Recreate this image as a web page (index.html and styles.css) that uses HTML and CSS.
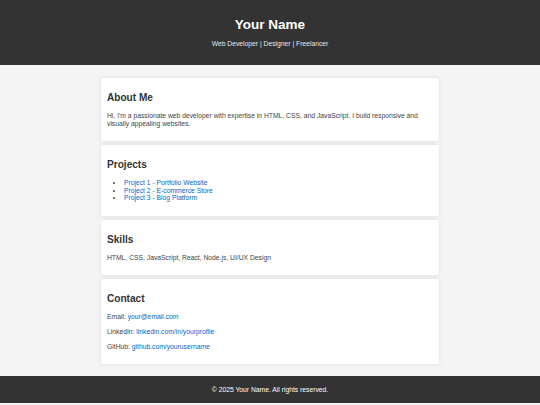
FILE: index.html
```html
<!DOCTYPE html>
<html lang="en">
<head>
    <meta charset="UTF-8">
    <meta name="viewport" content="width=device-width, initial-scale=1.0">
    <title>Your Name - Portfolio</title>
    <link rel="stylesheet" href="styles.css">
</head>
<body>

<!-- Top banner -->
<header class="site-header">
    <h1>Your Name</h1>
    <p>Web Developer | Designer | Freelancer</p>
</header>

<main class="content">
    <section class="card">
        <h2>About Me</h2>
        <p>Hi, I'm a passionate web developer with expertise in HTML, CSS, and JavaScript. I build responsive and visually appealing websites.</p>
    </section>

    <section class="card">
        <h2>Projects</h2>
        <ul class="project-list">
            <li><a href="#">Project 1 - Portfolio Website</a></li>
            <li><a href="#">Project 2 - E-commerce Store</a></li>
            <li><a href="#">Project 3 - Blog Platform</a></li>
        </ul>
    </section>

    <section class="card">
        <h2>Skills</h2>
        <p>HTML, CSS, JavaScript, React, Node.js, UI/UX Design</p>
    </section>

    <section class="card">
        <h2>Contact</h2>
        <p>Email: <a href="#">your@email.com</a></p>
        <p>LinkedIn: <a href="#">linkedin.com/in/yourprofile</a></p>
        <p>GitHub: <a href="#">github.com/yourusername</a></p>
    </section>
</main>

<footer class="site-footer">
    <p>&copy; 2025 Your Name. All rights reserved.</p>
</footer>

</body>
</html>
```

FILE: styles.css
```css
body {
    font-family: "Liberation Sans", Arial, sans-serif;
    font-size: 6.75px;
    margin: 0;
    padding: 0;
    background-color: #f4f4f4;
    color: #444;
}

/* Header */
.site-header {
    background-color: #333;
    color: white;
    text-align: center;
    padding: 17px 0 17.5px;
}

.site-header h1 {
    margin: 0 0 8px;
    font-size: 13.5px;
}

.site-header p {
    margin: 0;
    color: #e6e6e6;
}

/* Cards */
.content {
    width: 338px;
    margin: 13px auto 12px;
}

.card {
    background-color: white;
    padding: 6px;
    margin-bottom: 4px;
    border-radius: 2px;
    box-shadow: 0 0 4px rgba(0, 0, 0, 0.1);
}

.card h2 {
    font-size: 10.1px;
    color: #333;
    margin: 8.2px 0 9px;
}

.card p {
    margin: 7px 0;
    line-height: 8px;
}

.project-list {
    margin: 7.5px 0;
    padding-left: 16.9px;
    line-height: 7.8px;
}

a {
    color: #0066cc;
    text-decoration: none;
}

/* Footer */
.site-footer {
    background-color: #333;
    color: white;
    text-align: center;
    padding: 10px 0;
}

.site-footer p {
    margin: 0;
}
```
